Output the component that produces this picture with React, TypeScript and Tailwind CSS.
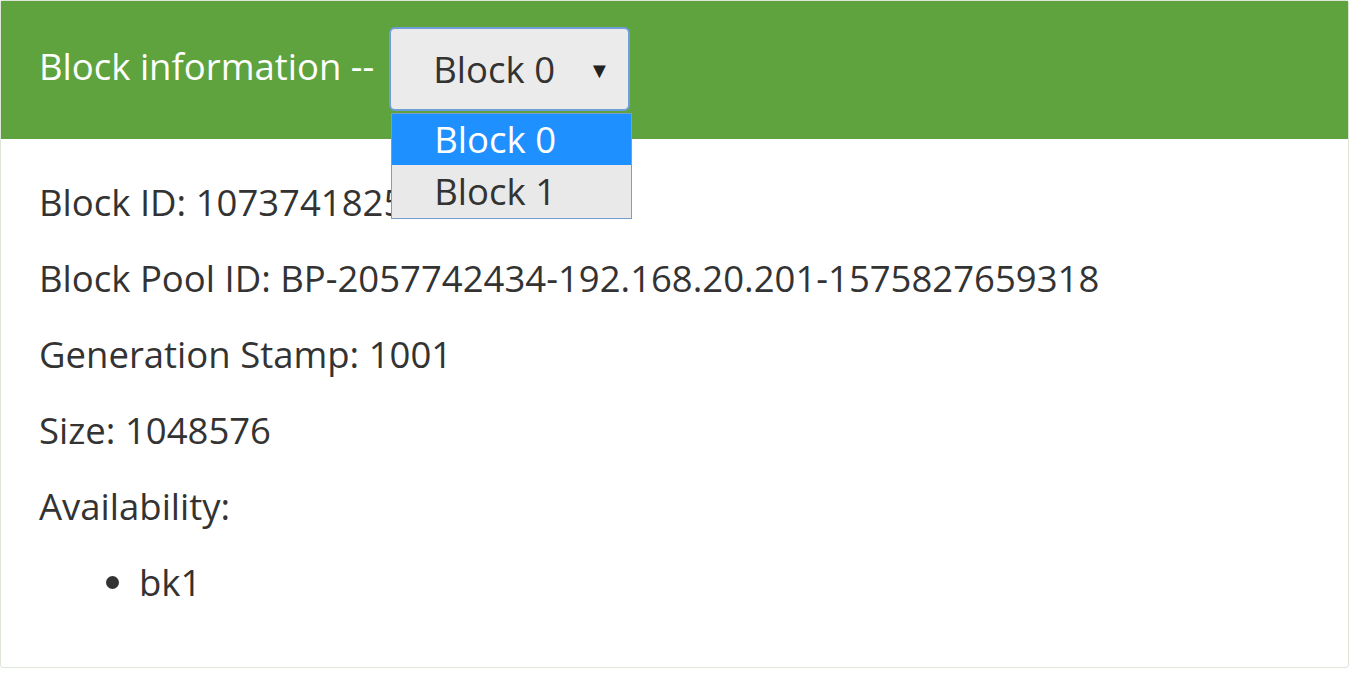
import React from 'react';

const rows = [
    'Block ID: 1073741825',
    'Block Pool ID: BP-2057742434-192.168.20.201-1575827659318',
    'Generation Stamp: 1001',
    'Size: 1048576',
    'Availability:',
];

const BlockSelect: React.FC = () => (
    <div className="relative mb-[2px] ml-[15px]">
        <div className="flex h-[84px] w-[241px] items-center rounded-[6px] border-2 border-[#6f9fd8] bg-[#ebebeb] pl-[42px] pr-[18px] text-[#333]">
            <span className="flex-1">Block 0</span>
            <span className="text-[22px] leading-none text-[#222]">▼</span>
        </div>
        {/* open option list */}
        <div className="absolute left-[2px] top-[86px] z-10 w-[241px] border border-[#7a9cd3] bg-[#e9e9e9]">
            <div className="flex h-[51px] items-center bg-[#1e90ff] pl-[42px] text-white">Block 0</div>
            <div className="flex h-[53px] items-center pl-[42px] text-[#333]">Block 1</div>
        </div>
    </div>
);

export default function App() {
    return (
        <div className="h-[673px] w-full bg-white font-['Open_Sans',sans-serif] text-[36.5px]">
            <div className="h-[668px] overflow-visible rounded-[3px] border border-[#dde6d8]">
                <div className="flex h-[138px] items-center bg-[#5ea33e] px-[38px]">
                    <span className="mb-[8px] text-white">Block information --</span>
                    <BlockSelect />
                </div>
                <div className="px-[38px] pt-[25px] text-[#333]">
                    {rows.map((r) => (
                        <p key={r} className="leading-[76px]">{r}</p>
                    ))}
                    <ul className="list-disc pl-[100px] leading-[76px]">
                        <li>bk1</li>
                    </ul>
                </div>
            </div>
        </div>
    );
}
